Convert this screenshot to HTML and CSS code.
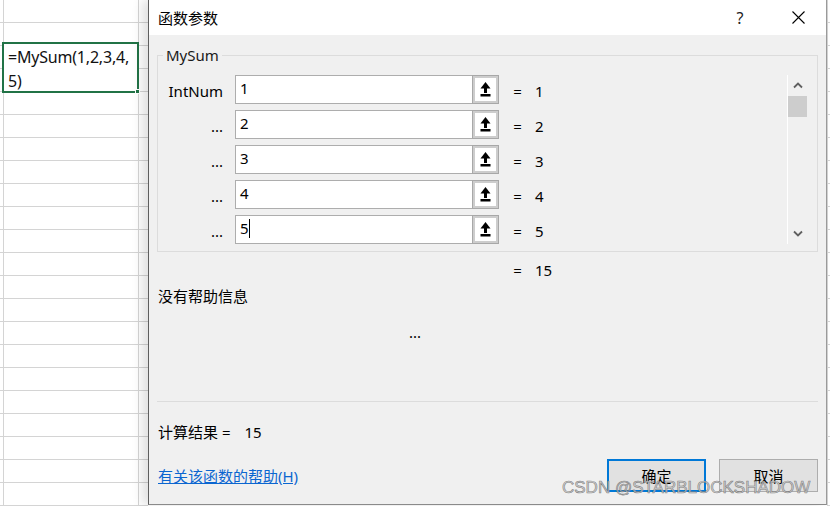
FILE: index.html
```html
<!DOCTYPE html>
<html lang="zh-CN">
<head>
<meta charset="utf-8">
<title>函数参数</title>
<link rel="stylesheet" href="styles.css">
</head>
<body>
<div class="app">
  <div class="sheet">
    <div class="cell">=MySum(1,2,3,4,<br>5)<span class="handle"></span></div>
  </div>
  <div class="dialog">
    <div class="titlebar">
      <span class="title">函数参数</span>
      <span class="tb-btn help">?</span>
      <span class="tb-btn close"><svg width="13" height="13" viewBox="0 0 13 13"><path d="M0.5 0.5 L12.5 12.5 M12.5 0.5 L0.5 12.5" stroke="#000" stroke-width="1.1" fill="none"/></svg></span>
    </div>
    <div class="body">
      <fieldset class="group">
        <legend>MySum</legend>
        <div class="group-inner">
          <div class="args">
            <div class="arg"><span class="lbl">IntNum</span><div class="field"><span class="val">1</span><span class="pick"><svg width="11" height="15" viewBox="0 0 11 15"><polygon points="5.5,0 10.5,6.5 0.5,6.5" fill="#000"/><rect x="4" y="6" width="3" height="5" fill="#000"/><rect x="0.5" y="12" width="10" height="2.5" fill="#000"/></svg></span></div><span class="eq">=</span><span class="res">1</span></div>
            <div class="arg"><span class="lbl">...</span><div class="field"><span class="val">2</span><span class="pick"><svg width="11" height="15" viewBox="0 0 11 15"><polygon points="5.5,0 10.5,6.5 0.5,6.5" fill="#000"/><rect x="4" y="6" width="3" height="5" fill="#000"/><rect x="0.5" y="12" width="10" height="2.5" fill="#000"/></svg></span></div><span class="eq">=</span><span class="res">2</span></div>
            <div class="arg"><span class="lbl">...</span><div class="field"><span class="val">3</span><span class="pick"><svg width="11" height="15" viewBox="0 0 11 15"><polygon points="5.5,0 10.5,6.5 0.5,6.5" fill="#000"/><rect x="4" y="6" width="3" height="5" fill="#000"/><rect x="0.5" y="12" width="10" height="2.5" fill="#000"/></svg></span></div><span class="eq">=</span><span class="res">3</span></div>
            <div class="arg"><span class="lbl">...</span><div class="field"><span class="val">4</span><span class="pick"><svg width="11" height="15" viewBox="0 0 11 15"><polygon points="5.5,0 10.5,6.5 0.5,6.5" fill="#000"/><rect x="4" y="6" width="3" height="5" fill="#000"/><rect x="0.5" y="12" width="10" height="2.5" fill="#000"/></svg></span></div><span class="eq">=</span><span class="res">4</span></div>
            <div class="arg"><span class="lbl">...</span><div class="field"><span class="val">5<span class="caret"></span></span><span class="pick"><svg width="11" height="15" viewBox="0 0 11 15"><polygon points="5.5,0 10.5,6.5 0.5,6.5" fill="#000"/><rect x="4" y="6" width="3" height="5" fill="#000"/><rect x="0.5" y="12" width="10" height="2.5" fill="#000"/></svg></span></div><span class="eq">=</span><span class="res">5</span></div>
          </div>
          <div class="scroll">
            <span class="sb-arrow"><svg width="10" height="7" viewBox="0 0 10 7"><path d="M1 5.5 L5 1.5 L9 5.5" stroke="#606060" stroke-width="1.8" fill="none"/></svg></span>
            <span class="thumb"></span>
            <span class="sb-track"></span>
            <span class="sb-arrow"><svg width="10" height="7" viewBox="0 0 10 7"><path d="M1 1.5 L5 5.5 L9 1.5" stroke="#606060" stroke-width="1.8" fill="none"/></svg></span>
          </div>
        </div>
      </fieldset>
      <div class="total"><span class="eq">=</span><span class="res">15</span></div>
      <div class="help-text">没有帮助信息</div>
      <div class="desc">...</div>
      <div class="sep"></div>
      <div class="result">计算结果 =<span class="res-val">15</span></div>
      <div class="footer">
        <a class="link" href="#">有关该函数的帮助(H)</a>
        <div class="buttons">
          <button class="btn primary">确定</button>
          <button class="btn">取消</button>
        </div>
      </div>
    </div>
    <div class="watermark">CSDN @STARBLOCKSHADOW</div>
  </div>
  <div class="sheet-right"></div>
</div>
</body>
</html>
```

FILE: styles.css
```css
* { box-sizing: border-box; }
html, body { margin: 0; padding: 0; }
body {
  width: 830px;
  height: 506px;
  overflow: hidden;
  background: #fff;
  font-family: "Noto Sans", "Noto Sans CJK SC", sans-serif;
  font-size: 15px;
  color: #000;
}
.app {
  display: flex;
  height: 506px;
}
.sheet {
  width: 148px;
  flex: none;
  padding: 42px 0 0 2px;
  background-image:
    linear-gradient(to right, transparent 3px, #d4d4d4 3px, #d4d4d4 4px, transparent 4px, transparent 138px, #d4d4d4 138px, #d4d4d4 139px, transparent 139px),
    repeating-linear-gradient(to bottom, transparent 0, transparent 22px, #d4d4d4 22px, #d4d4d4 23px);
}
.cell {
  position: relative;
  width: 137px;
  height: 51px;
  border: 2px solid #217346;
  background: #fff;
  padding: 1px 0 0 4px;
  font-size: 16px;
  line-height: 24px;
  color: #111;
  letter-spacing: -0.2px;
}
.handle {
  position: absolute;
  right: -3px;
  bottom: -3px;
  width: 5px;
  height: 5px;
  background: #217346;
  border: 1px solid #fff;
}
.sheet-right {
  flex: 1;
  border-left: 1px solid #d4d4d4;
  background-image: repeating-linear-gradient(to bottom, transparent 0, transparent 22px, #d4d4d4 22px, #d4d4d4 23px);
}
.dialog {
  position: relative;
  width: 679px;
  flex: none;
  height: 505px;
  background: #f0f0f0;
  border-left: 1px solid #5e5e5e;
  border-right: 1px solid #9a9a9a;
  border-bottom: 1px solid #8a8a8a;
  box-shadow: -6px 0 10px rgba(0, 0, 0, 0.12);
  display: flex;
  flex-direction: column;
}
.titlebar {
  height: 35px;
  background: #fff;
  display: flex;
  align-items: center;
  padding-left: 9px;
  padding-right: 5px;
}
.title {
  flex: 1;
  font-size: 15px;
  line-height: 20px;
}
.tb-btn {
  width: 46px;
  height: 35px;
  display: flex;
  align-items: center;
  justify-content: center;
}
.help {
  font-size: 16px;
  color: #222;
  margin-right: 12px;
}
.body {
  flex: 1;
  padding: 10px 8px 0 8px;
  display: flex;
  flex-direction: column;
}
.group {
  margin: 0;
  padding: 10px 0 7px 0;
  border: 1px solid #dcdcdc;
  min-width: 0;
}
.group legend {
  padding: 0 3px;
  margin-left: 5px;
  font-size: 15px;
  line-height: 20px;
  color: #1a1a1a;
}
.group-inner {
  display: flex;
}
.args {
  flex: 1;
  display: flex;
  flex-direction: column;
  gap: 6px;
}
.arg {
  display: flex;
  align-items: center;
  height: 29px;
  line-height: 20px;
}
.lbl {
  width: 65px;
  margin-right: 12px;
  text-align: right;
  padding-top: 2px;
}
.field {
  display: flex;
  width: 264px;
  height: 29px;
}
.val {
  flex: 1;
  background: #fff;
  border: 1px solid #adadad;
  border-right: none;
  padding: 1px 0 0 4px;
  line-height: 22px;
  display: flex;
  align-items: flex-start;
}
.caret {
  display: inline-block;
  width: 1px;
  height: 19px;
  margin-top: 2px;
  background: #000;
}
.pick {
  width: 27px;
  border: 1px solid #a8a8a8;
  background: #fff;
  box-shadow: inset 0 0 0 2px #cdcdcd;
  display: flex;
  align-items: center;
  justify-content: center;
}
.eq {
  width: 9px;
  margin-left: 14px;
  text-align: center;
}
.res {
  margin-left: 13px;
}
.arg .eq, .arg .res { padding-top: 2px; }
.scroll {
  width: 20px;
  margin-right: 10px;
  border-left: 1px solid #fff;
  display: flex;
  flex-direction: column;
}
.sb-arrow {
  height: 21px;
  display: flex;
  align-items: center;
  justify-content: center;
}
.thumb {
  height: 21px;
  background: #cdcdcd;
}
.sb-track {
  flex: 1;
}
.total {
  margin-top: 8px;
  padding-left: 342px;
  line-height: 20px;
  display: flex;
}
.help-text {
  margin-top: 6px;
  padding-left: 1px;
  line-height: 20px;
}
.desc {
  margin-top: 16px;
  padding-left: 252px;
  line-height: 20px;
}
.sep {
  margin-top: 59px;
  height: 1px;
  background: #dcdcdc;
}
.result {
  margin-top: 20px;
  padding-left: 1px;
  line-height: 20px;
}
.res-val {
  margin-left: 14px;
}
.footer {
  margin-top: 17px;
  display: flex;
  align-items: center;
  justify-content: space-between;
}
.link {
  color: #0b66d0;
  text-decoration: underline;
  padding-left: 1px;
  line-height: 20px;
}
.buttons {
  display: flex;
  gap: 13px;
}
.btn {
  width: 99px;
  height: 33px;
  background: #e1e1e1;
  border: 1px solid #adadad;
  font-family: "Noto Sans CJK SC", sans-serif;
  font-size: 15px;
  color: #000;
  padding: 0;
}
.btn.primary {
  border: 2px solid #0078d7;
}
.watermark {
  position: absolute;
  left: 413px;
  top: 478px;
  font-family: "Liberation Sans", Arial, sans-serif;
  font-size: 17px;
  line-height: 20px;
  color: rgba(205, 205, 205, 0.85);
  -webkit-text-stroke: 0.6px rgba(110, 110, 110, 0.85);
  white-space: nowrap;
  pointer-events: none;
}
```
